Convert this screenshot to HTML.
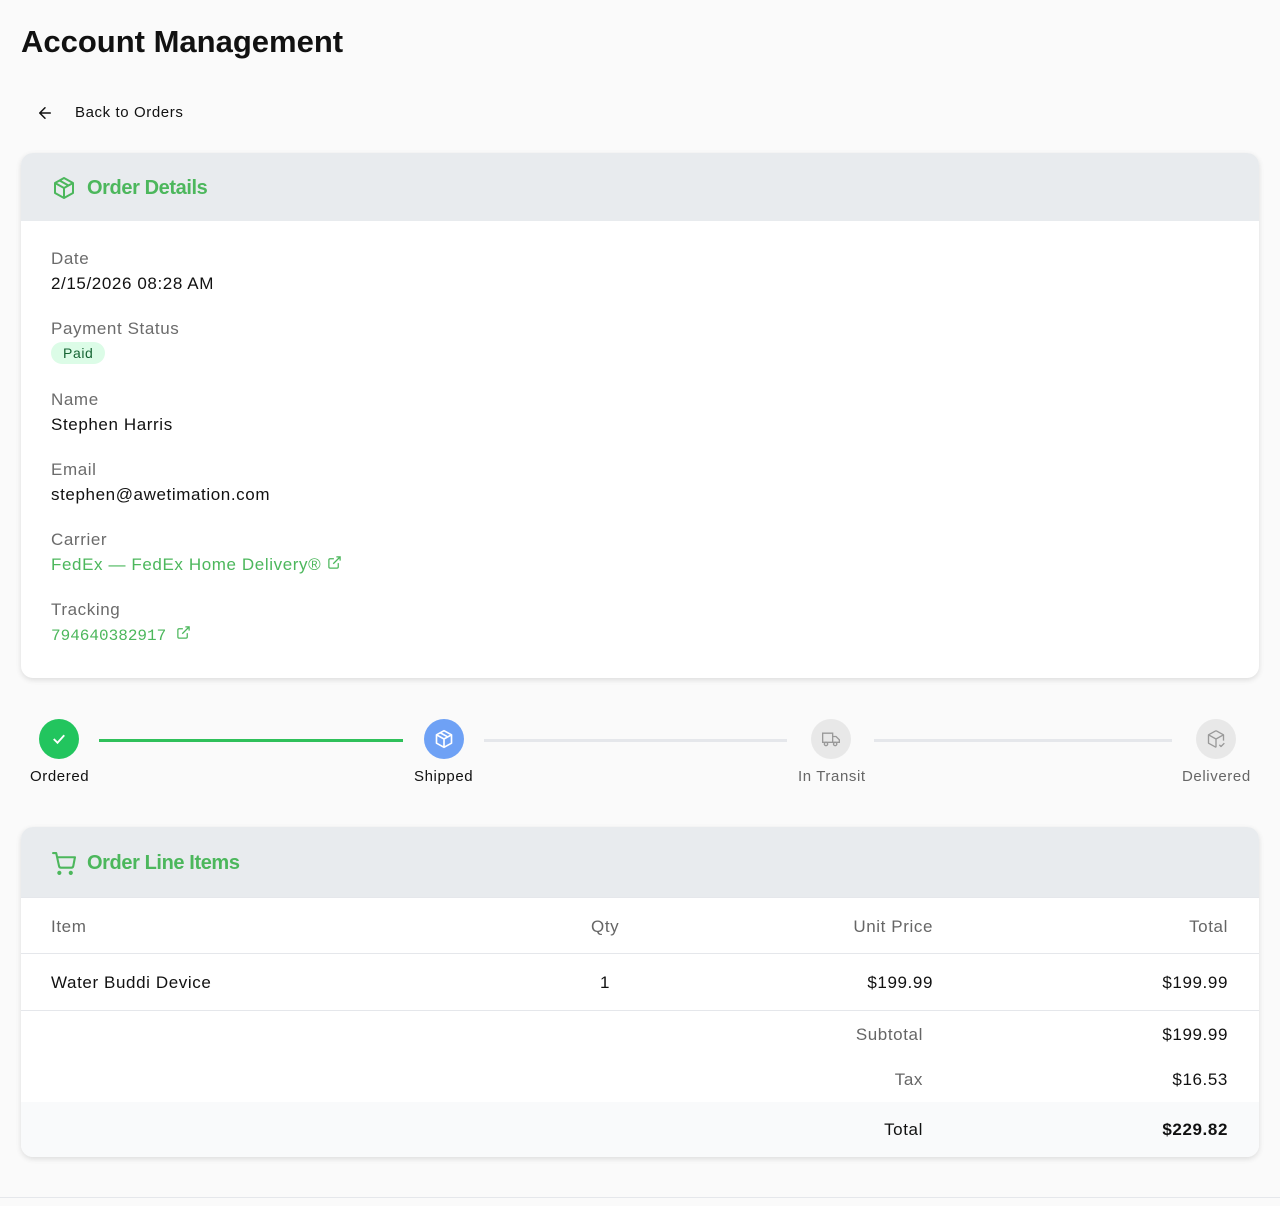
<!DOCTYPE html>
<html><head><meta charset="utf-8"><style>
*{box-sizing:border-box;margin:0;padding:0}
body{width:1280px;height:1206px;background:#fafafa;font-family:"Liberation Sans",sans-serif;color:#111;position:relative;overflow:hidden;letter-spacing:0.6px}
.abs{position:absolute}
h1{position:absolute;left:21px;top:24px;font-size:31px;font-weight:700;color:#111;letter-spacing:0}
.card{position:absolute;left:21px;width:1238px;background:#fff;border-radius:12px;box-shadow:0 2px 6px rgba(0,0,0,.12);overflow:hidden}
.hd{background:#e8ebee;display:flex;align-items:center;padding-left:31px;color:#4cb75c;font-size:20px;font-weight:700;letter-spacing:-0.4px}
.hd svg{margin-right:11px}
.lbl{position:absolute;left:30px;font-size:17px;color:#6b6b6b}
.val{position:absolute;left:30px;font-size:17px;color:#111}
.g{color:#4cb75c}
.circ{position:absolute;width:40px;height:40px;border-radius:50%;top:719px;display:flex;align-items:center;justify-content:center}
.sl{position:absolute;top:768px;font-size:15px}
.ln{position:absolute;top:739px;height:3px}
.row{position:absolute;left:0;width:1238px;font-size:17px;border-bottom:1px solid #e5e7eb}
.row span{position:absolute}
</style></head><body>
<h1>Account Management</h1>
<svg class="abs" style="left:36px;top:104px" width="18" height="18" viewBox="0 0 24 24" fill="none" stroke="#111" stroke-width="2" stroke-linecap="round" stroke-linejoin="round"><path d="M19 12H5M12 19l-7-7 7-7"/></svg>
<div class="abs" style="left:75px;top:104px;font-size:15px">Back to Orders</div>

<div class="card" style="top:153px;height:525px">
 <div class="hd" style="height:68px;padding-top:2px"><svg width="24" height="24" viewBox="0 0 24 24" fill="none" stroke="#4cb75c" stroke-width="2" stroke-linejoin="round"><path d="M12 2l9 5v10l-9 5-9-5V7z"/><path d="M3 7l9 5 9-5M12 12v10M7.5 4.5l9 5"/></svg>Order Details</div>
 <div class="lbl" style="top:96px">Date</div>
 <div class="val" style="top:121px">2/15/2026 08:28 AM</div>
 <div class="lbl" style="top:166px">Payment Status</div>
 <div class="abs" style="left:30px;top:189px;background:#dcfce7;color:#166534;border-radius:12px;padding:3px 12px;font-size:14px">Paid</div>
 <div class="lbl" style="top:237px">Name</div>
 <div class="val" style="top:262px">Stephen Harris</div>
 <div class="lbl" style="top:307px">Email</div>
 <div class="val" style="top:332px">stephen@awetimation.com</div>
 <div class="lbl" style="top:377px">Carrier</div>
 <div class="val g" style="top:402px">FedEx — FedEx Home Delivery® <svg width="15" height="15" viewBox="0 0 24 24" fill="none" stroke="#4cb75c" stroke-width="2"><path d="M18 13v6a2 2 0 0 1-2 2H5a2 2 0 0 1-2-2V8a2 2 0 0 1 2-2h6M15 3h6v6M10 14L21 3"/></svg></div>
 <div class="lbl" style="top:447px">Tracking</div>
 <div class="val g" style="top:472px;font-family:'Liberation Mono',monospace;font-size:16px;letter-spacing:0">794640382917 <svg width="15" height="15" viewBox="0 0 24 24" fill="none" stroke="#4cb75c" stroke-width="2"><path d="M18 13v6a2 2 0 0 1-2 2H5a2 2 0 0 1-2-2V8a2 2 0 0 1 2-2h6M15 3h6v6M10 14L21 3"/></svg></div>
</div>

<div class="ln" style="left:99px;width:304px;background:#2fc05a"></div>
<div class="ln" style="left:484px;width:303px;background:#e5e7eb"></div>
<div class="ln" style="left:874px;width:298px;background:#e5e7eb"></div>
<div class="circ" style="left:39px;background:#22c55e"><svg width="18" height="18" viewBox="0 0 24 24" fill="none" stroke="#fff" stroke-width="2.5"><path d="M5 12l5 5 9-10"/></svg></div>
<div class="circ" style="left:424px;background:#6ea1f5"><svg width="20" height="20" viewBox="0 0 24 24" fill="none" stroke="#fff" stroke-width="2" stroke-linejoin="round"><path d="M12 2l9 5v10l-9 5-9-5V7z"/><path d="M3 7l9 5 9-5M12 12v10M7.5 4.5l9 5"/></svg></div>
<div class="circ" style="left:811px;background:#e8e8e8"><svg width="20" height="20" viewBox="0 0 24 24" fill="none" stroke="#999" stroke-width="1.6"><path d="M2 5h12v11H2zM14 9h4l4 4v3h-8z"/><circle cx="6" cy="18" r="2"/><circle cx="17" cy="18" r="2"/></svg></div>
<div class="circ" style="left:1196px;background:#e8e8e8"><svg width="20" height="20" viewBox="0 0 24 24" fill="none" stroke="#999" stroke-width="1.6" stroke-linejoin="round"><path d="M12 2l9 5v7M12 22l-9-5V7l9-5"/><path d="M3 7l9 5 9-5M12 12v10M16 19l2 2 4-4"/></svg></div>
<div class="sl" style="left:30px">Ordered</div>
<div class="sl" style="left:414px">Shipped</div>
<div class="sl" style="left:798px;color:#666">In Transit</div>
<div class="sl" style="left:1182px;color:#666">Delivered</div>

<div class="card" style="top:827px;height:330px">
 <div class="hd" style="height:71px;border-bottom:1px solid #e5e7eb;padding-left:30px;padding-top:2px"><svg width="25" height="25" viewBox="0 0 24 24" fill="none" stroke="#4cb75c" stroke-width="2" stroke-linecap="round" stroke-linejoin="round"><circle cx="8" cy="21" r="1"/><circle cx="19" cy="21" r="1"/><path d="M2 2h3l2.7 12.4a2 2 0 0 0 2 1.6h9.7a2 2 0 0 0 2-1.6L23 6H6"/></svg>Order Line Items</div>
 <div class="row" style="top:71px;height:56px;color:#666"><span style="left:30px;top:19px">Item</span><span style="left:570px;top:19px">Qty</span><span style="right:326px;top:19px">Unit Price</span><span style="right:31px;top:19px">Total</span></div>
 <div class="row" style="top:127px;height:57px"><span style="left:30px;top:19px">Water Buddi Device</span><span style="left:579px;top:19px">1</span><span style="right:326px;top:19px">$199.99</span><span style="right:31px;top:19px">$199.99</span></div>
 <div class="row" style="top:184px;height:46px;border:none"><span style="right:336px;top:14px;color:#666">Subtotal</span><span style="right:31px;top:14px">$199.99</span></div>
 <div class="row" style="top:230px;height:45px;border:none"><span style="right:336px;top:13px;color:#666">Tax</span><span style="right:31px;top:13px">$16.53</span></div>
 <div class="row" style="top:275px;height:55px;border:none;background:#f9fafb"><span style="right:336px;top:18px">Total</span><span style="right:31px;top:18px;font-weight:700">$229.82</span></div>
</div>
<div class="abs" style="left:0;top:1197px;width:1280px;height:1px;background:#e5e7eb"></div>
</body></html>
